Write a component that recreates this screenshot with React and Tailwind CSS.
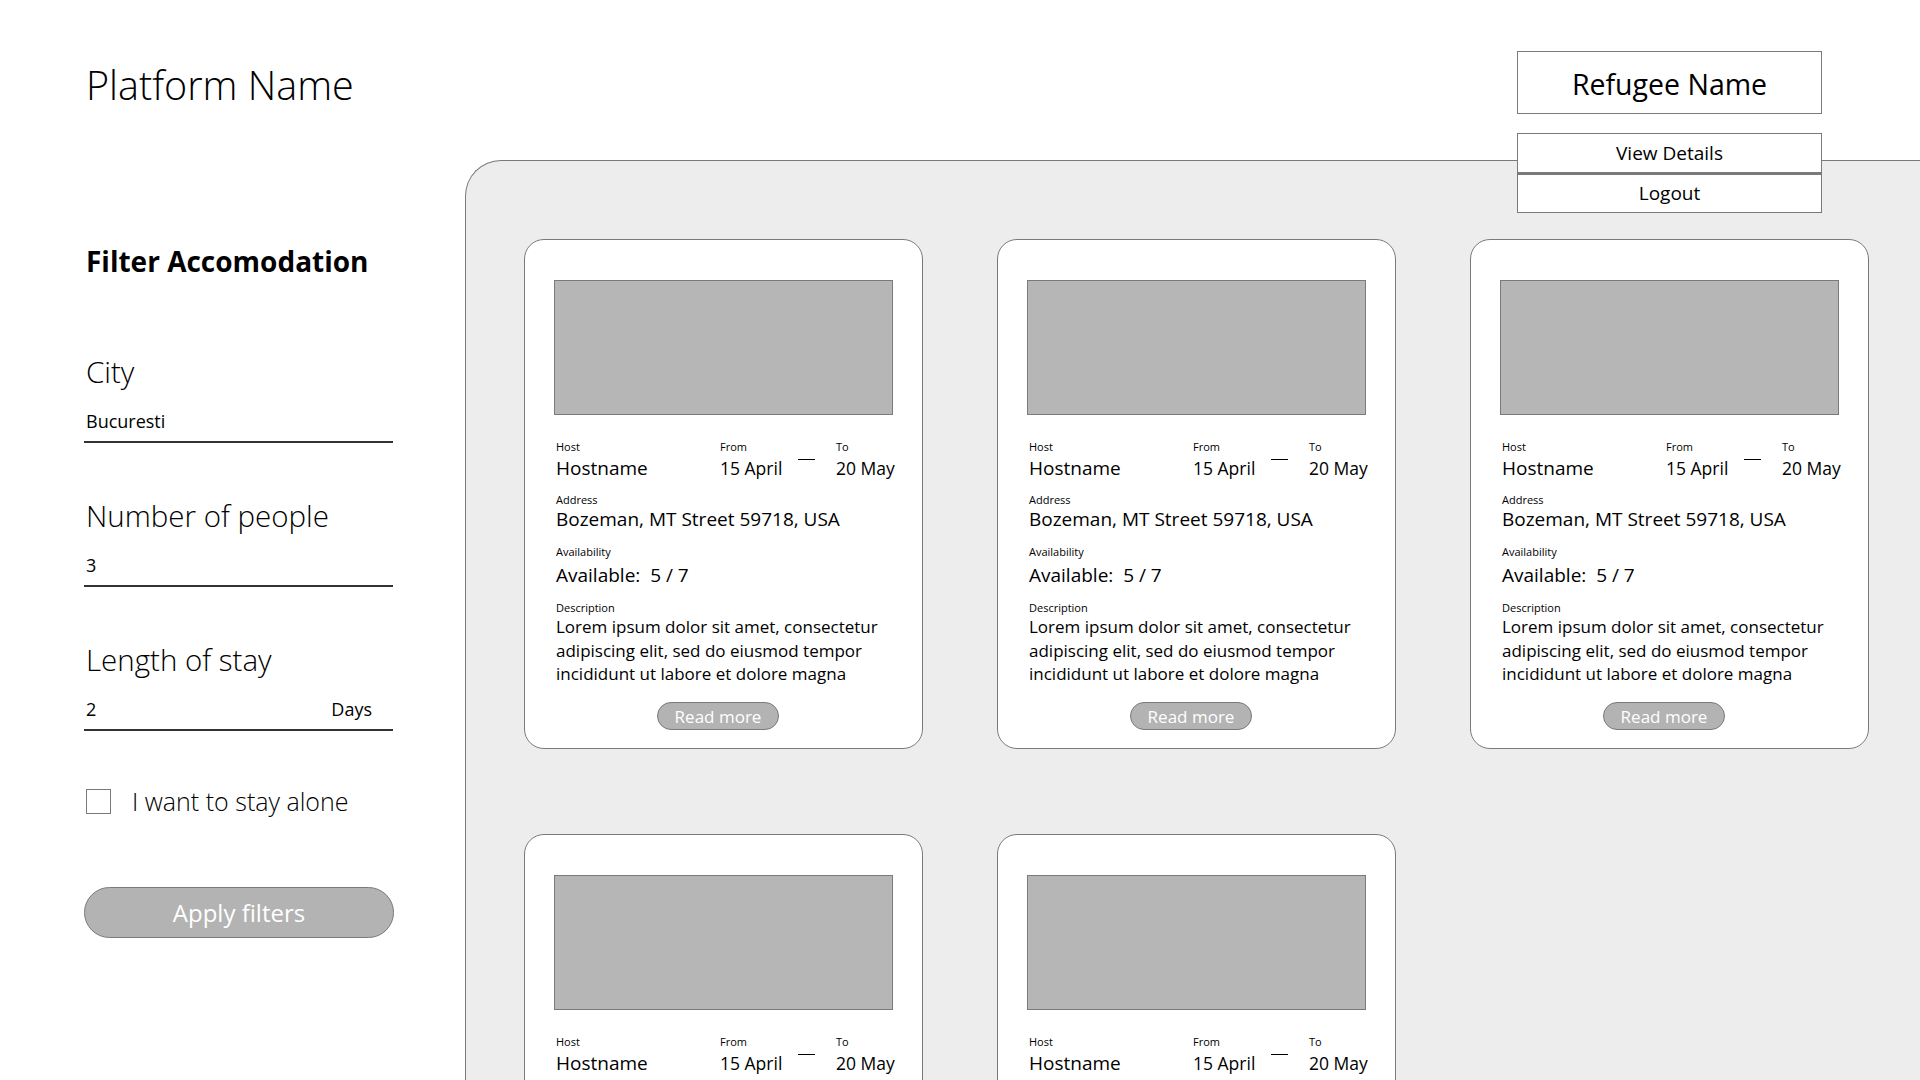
import { Fragment } from 'react';

const listings = [1, 2, 3, 4, 5].map((id) => ({
  id,
  host: 'Hostname',
  from: '15 April',
  to: '20 May',
  address: 'Bozeman, MT Street 59718, USA',
  available: '5 / 7',
  description: 'Lorem ipsum dolor sit amet, consectetur adipiscing elit, sed do eiusmod tempor incididunt ut labore et dolore magna',
}));

function Label({ children }) {
  return <div className="text-[11px] leading-[14px] text-black">{children}</div>;
}

function Field({ label, value, suffix, className = '' }) {
  return (
    <div className={className}>
      <div className="text-[29.5px] leading-[36px] font-light">{label}</div>
      <div className="mt-[19px] flex w-[309px] -ml-[2px] items-end justify-between border-b-2 border-[#333] pb-[8px] pl-[2px] pr-[21px] text-[18px] leading-[24px]">
        <span>{value}</span>
        {suffix && <span>{suffix}</span>}
      </div>
    </div>
  );
}

function ListingCard({ item }) {
  return (
    <article className="flex h-[510px] flex-col rounded-[20px] border border-[#7a7a7a] bg-white px-[29px] pt-[40px] pb-[18px]">
      <div className="h-[135px] w-full shrink-0 border border-[#7a7a7a] bg-[#b6b6b6]" />
      <div className="mt-[25px] flex whitespace-nowrap">
        <div className="w-[166px] shrink-0 pl-[2px]">
          <Label>Host</Label>
          <div className="mt-[2px] text-[19px] leading-[24px]">{item.host}</div>
        </div>
        <div className="w-[78px] shrink-0">
          <Label>From</Label>
          <div className="mt-[2px] text-[17.5px] leading-[24px]">{item.from}</div>
        </div>
        <div className="w-[17px] shrink-0 pt-[19px]">
          <div className="h-px w-full bg-black" />
        </div>
        <div className="ml-[21px] shrink-0">
          <Label>To</Label>
          <div className="mt-[2px] text-[17.5px] leading-[24px]">{item.to}</div>
        </div>
      </div>
      <div className="mt-[13px] pl-[2px]">
        <Label>Address</Label>
        <div className="text-[19px] leading-[24px]">{item.address}</div>
      </div>
      <div className="mt-[14px] pl-[2px]">
        <Label>Availability</Label>
        <div className="mt-[4px] text-[19px] leading-[24px]">Available:&nbsp; {item.available}</div>
      </div>
      <div className="mt-[14px] pl-[2px]">
        <Label>Description</Label>
        <p className="text-[17px] leading-[23.5px]">{item.description}</p>
      </div>
      <button className="mt-auto ml-[103px] h-[28px] w-[122px] shrink-0 rounded-full border border-[#7a7a7a] bg-[#b3b3b3] text-[17px] leading-none text-white">
        Read more
      </button>
    </article>
  );
}

export default function App() {
  return (
    <div className="relative h-[1080px] w-[1920px] overflow-hidden bg-white font-['Open_Sans',sans-serif] text-black">
      <header className="flex h-[160px] items-start justify-between pl-[86px] pr-[98px]">
        <h1 className="mt-[60px] text-[39.5px] leading-[50px] font-light">Platform Name</h1>
        <div className="relative mt-[51px] w-[305px]">
          <div className="flex h-[63px] items-center justify-center border border-[#7a7a7a] pt-[3px] text-[28.5px]">
            Refugee Name
          </div>
          <div className="absolute top-[82px] left-0 z-10 w-full bg-white text-[19px]">
            <div className="flex h-[40px] items-center justify-center border border-[#7a7a7a]">View Details</div>
            <div className="flex h-[40px] items-center justify-center border border-t-2 border-[#7a7a7a]">Logout</div>
          </div>
        </div>
      </header>

      <div className="flex">
        <aside className="w-[465px] shrink-0 pl-[86px] pt-[83px]">
          <h2 className="text-[28px] leading-[36px] font-bold">Filter Accomodation</h2>
          <Field className="mt-[75px]" label="City" value="Bucuresti" />
          <Field className="mt-[55px]" label="Number of people" value="3" />
          <Field className="mt-[55px]" label="Length of stay" value="2" suffix="Days" />
          <label className="mt-[54px] flex items-center gap-[21px]">
            <span className="h-[25px] w-[25px] border border-[#7a7a7a] bg-white" />
            <span className="text-[25px] leading-[32px] font-light">I want to stay alone</span>
          </label>
          <button className="-ml-[2px] mt-[70px] h-[51px] w-[310px] rounded-full border border-[#7a7a7a] bg-[#b3b3b3] text-[24px] text-white">
            Apply filters
          </button>
        </aside>

        <main className="h-[920px] flex-1 rounded-tl-[36px] border-t border-l border-[#7a7a7a] bg-[#ededed] pl-[58px] pt-[78px]">
          <div className="grid grid-cols-[399px_399px_399px] gap-x-[74px] gap-y-[85px]">
            {listings.map((item) => (
              <Fragment key={item.id}>
                <ListingCard item={item} />
              </Fragment>
            ))}
          </div>
        </main>
      </div>
    </div>
  );
}
